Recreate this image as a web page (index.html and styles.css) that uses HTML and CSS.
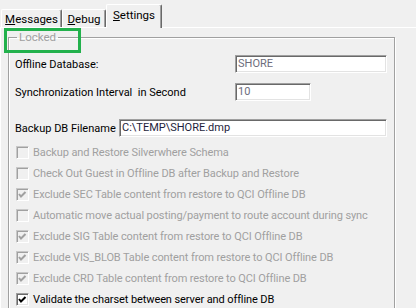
FILE: index.html
```html
<!DOCTYPE html>
<html>
<head>
<meta charset="utf-8">
<link rel="stylesheet" href="styles.css">
</head>
<body>
<div class="window">
  <div class="tabs">
    <div class="tab tab-messages"><span class="acc">M</span>essages</div>
    <div class="tab tab-debug"><span class="acc">D</span>ebug</div>
    <div class="tab tab-settings selected"><span class="acc">S</span>ettings</div>
  </div>
  <div class="panel">
    <fieldset class="group">
      <legend class="group-title">Locked</legend>
      <div class="group-body">
        <div class="field-row row-db">
          <span class="label label-wide">Offline Database:</span>
          <span class="input input-db muted">SHORE</span>
        </div>
        <div class="field-row row-sync">
          <span class="label label-wide">Synchronization Interval&nbsp; in Second</span>
          <span class="input input-sync muted">10</span>
        </div>
        <div class="field-row row-backup">
          <span class="label label-short">Backup DB Filename</span>
          <span class="input input-backup">C:\TEMP\SHORE.dmp</span>
        </div>
        <ul class="checks">
          <li class="check disabled"><span class="box"></span>Backup and Restore Silverwhere Schema</li>
          <li class="check disabled"><span class="box"></span>Check Out Guest in Offline DB after Backup and Restore</li>
          <li class="check disabled checked"><span class="box"><svg viewBox="0 0 13 13" width="13" height="13"><polyline points="3,6 5,8.5 9.5,4" /></svg></span>Exclude SEC Table content from restore to QCI Offline DB</li>
          <li class="check disabled"><span class="box"></span>Automatic move actual posting/payment to route account during sync</li>
          <li class="check disabled checked"><span class="box"><svg viewBox="0 0 13 13" width="13" height="13"><polyline points="3,6 5,8.5 9.5,4" /></svg></span>Exclude SIG Table content from restore to QCI Offline DB</li>
          <li class="check disabled checked"><span class="box"><svg viewBox="0 0 13 13" width="13" height="13"><polyline points="3,6 5,8.5 9.5,4" /></svg></span>Exclude VIS_BLOB Table content from restore to QCI Offline DB</li>
          <li class="check disabled checked"><span class="box"><svg viewBox="0 0 13 13" width="13" height="13"><polyline points="3,6 5,8.5 9.5,4" /></svg></span>Exclude CRD Table content from restore to QCI Offline DB</li>
          <li class="check checked"><span class="box"><svg viewBox="0 0 13 13" width="13" height="13"><polyline points="3,6 5,8.5 9.5,4" /></svg></span>Validate the charset between server and offline DB</li>
        </ul>
      </div>
    </fieldset>
  </div>
  <div class="highlight"></div>
</div>
</body>
</html>
```
FILE: styles.css
```css
html, body {
  margin: 0;
  padding: 0;
  background: #f0f0f0;
}
body {
  width: 416px;
  height: 308px;
  overflow: hidden;
  font-family: Roboto, "Liberation Sans", sans-serif;
  font-size: 11px;
  color: #000;
}
.window {
  position: relative;
  width: 416px;
  height: 308px;
  overflow: hidden;
}
.tabs {
  display: flex;
  align-items: flex-end;
  height: 27px;
  padding-left: 1px;
  position: relative;
  z-index: 2;
}
.tab {
  box-sizing: border-box;
  height: 18px;
  border-top: 1px solid #fff;
  border-left: 1px solid #fff;
  border-right: 1px solid #696969;
  box-shadow: inset -1px 0 0 #a0a0a0;
  border-radius: 2px 2px 0 0;
  display: flex;
  align-items: center;
  justify-content: center;
  line-height: 13px;
  padding-top: 1px;
  font-size: 11.5px;
}
.tab-messages { width: 61px; }
.tab-debug { width: 44px; }
.tab-settings { width: 56px; }
.tab.selected {
  height: 24px;
  margin-bottom: -1px;
  background: #f0f0f0;
  padding-top: 0;
  padding-bottom: 3px;
}
.acc { text-decoration: underline; text-underline-offset: 1px; }
.panel {
  border-top: 1px solid #fff;
  border-left: 1px solid #fff;
  height: 290px;
  position: relative;
  z-index: 1;
}
.group {
  box-sizing: border-box;
  margin: 3px 0 0 7px;
  padding: 0;
  width: 387px;
  height: 320px;
  border: 1px solid #a0a0a0;
  box-shadow: 1px 1px 0 #fff, inset 1px 1px 0 #fff;
}
.group-title {
  margin-left: 8px;
  padding: 0 2px;
  line-height: 12px;
  font-size: 11.5px;
  color: #a0a0a0;
}
.group-body {
  padding-left: 6px;
}
.field-row {
  display: flex;
  align-items: center;
  height: 18px;
}
.row-db { margin-top: 12px; }
.row-sync { margin-top: 10px; }
.row-backup { margin-top: 18px; }
.label-wide { width: 220px; flex: none; }
.label-short { width: 104px; flex: none; }
.input {
  box-sizing: border-box;
  height: 18px;
  background: #fff;
  border: 1px solid;
  border-color: #a0a0a0 #fff #fff #a0a0a0;
  box-shadow: inset 1px 1px 0 #696969, inset -1px -1px 0 #e3e3e3;
  padding: 0 0 0 2px;
  line-height: 16px;
  color: #1e1e3c;
  white-space: nowrap;
}
.input.muted { color: #6d6d7d; }
.input-db { width: 152px; }
.input-sync { width: 76px; }
.input-backup { width: 268px; }
.checks {
  list-style: none;
  margin: 5px 0 0;
  padding: 0 0 0 1px;
}
.check {
  display: flex;
  align-items: center;
  gap: 4px;
  height: 21px;
  white-space: nowrap;
  letter-spacing: -0.1px;
}
.box {
  box-sizing: border-box;
  flex: none;
  width: 13px;
  height: 13px;
  background: #fff;
  border: 1px solid;
  border-color: #a0a0a0 #fff #fff #a0a0a0;
  box-shadow: inset 1px 1px 0 #696969, inset -1px -1px 0 #e3e3e3;
  position: relative;
}
.box svg {
  position: absolute;
  left: -1px;
  top: -1px;
}
.box polyline {
  fill: none;
  stroke: #000;
  stroke-width: 2;
}
.check.disabled { color: #a0a0a0; }
.check.disabled .box {
  background: #f0f0f0;
  border-color: #c8c8c8 #fff #fff #c8c8c8;
  box-shadow: inset 1px 1px 0 #a0a0a0, inset -1px -1px 0 #f0f0f0;
}
.check.disabled polyline { stroke: #a0a0a0; }
.highlight {
  position: absolute;
  left: 4px;
  top: 28px;
  width: 77px;
  height: 25px;
  box-sizing: border-box;
  border: 3px solid #22b14c;
  z-index: 3;
}
```
